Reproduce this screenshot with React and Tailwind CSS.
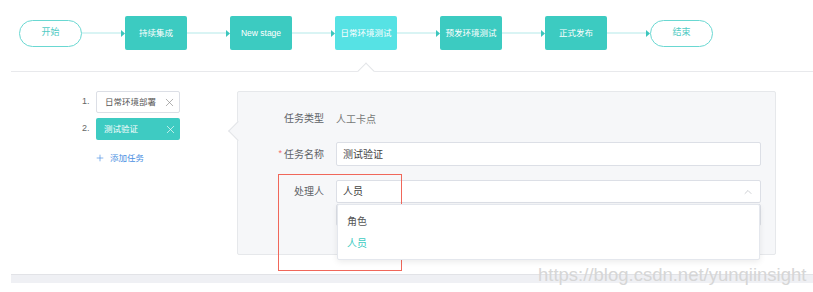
import React from 'react';
import { X, ChevronUp, Plus } from 'lucide-react';

const cjk = { fontFamily: '"Liberation Sans", "Noto Sans CJK SC", sans-serif' };

const stages = [
  { label: '开始', pill: true },
  { label: '持续集成' },
  { label: 'New stage' },
  { label: '日常环境测试', active: true },
  { label: '预发环境测试' },
  { label: '正式发布' },
  { label: '结束', pill: true },
];

const Connector = () => (
  <div className="flex items-center w-[43px]">
    <div className="flex-1 h-[2px] bg-[#d9f4f4]" />
    <svg width="4" height="7" viewBox="0 0 4 7" className="shrink-0">
      <path d="M0 0 L4 3.5 L0 7 Z" fill="#3bc6bd" />
    </svg>
  </div>
);

const StageNode = ({ stage }) => {
  if (stage.pill) {
    return (
      <div className="w-[63px] h-[27px] rounded-full border border-[#6ad8d2] bg-white flex items-center justify-center text-[9px] text-[#52cbc4]">
        {stage.label}
      </div>
    );
  }
  return (
    <div
      className={`w-[62px] h-[34px] rounded-[2px] flex items-center justify-center text-[8.5px] text-white ${
        stage.active ? 'bg-[#56e2e4]' : 'bg-[#3ccbc1]'
      }`}
    >
      {stage.label}
    </div>
  );
};

const TaskItem = ({ index, label, active }) => (
  <div className="flex items-center h-[22px]">
    <span className="w-[14px] text-[9px] text-[#666]">{index}.</span>
    <div
      className={`w-[84px] h-[22px] rounded-[2px] flex items-center justify-between pl-[8px] pr-[3px] text-[8.5px] ${
        active ? 'bg-[#3ecbc2] text-white' : 'bg-white border border-[#dcdfe6] text-[#555]'
      }`}
    >
      <span>{label}</span>
      <X size={13} strokeWidth={1.2} className={active ? 'text-white' : 'text-[#888]'} />
    </div>
  </div>
);

const FormRow = ({ label, required, children, className = '' }) => (
  <div className={`flex items-center ${className}`}>
    <div className="w-[86px] text-right text-[10px] text-[#5f6368] flex justify-end items-center">
      {required && <span className="text-[#f56c6c] mr-[2px] text-[9px]">*</span>}
      {label}
    </div>
    <div className="ml-[12px] flex-1">{children}</div>
  </div>
);

export default function App() {
  return (
    <div className="relative w-[813px] h-[292px] bg-white overflow-hidden" style={cjk}>
      {/* pipeline */}
      <div className="flex items-center pl-[19px] pt-4 h-[50px]">
        {stages.map((s, i) => (
          <React.Fragment key={s.label}>
            {i > 0 && <Connector />}
            <StageNode stage={s} />
          </React.Fragment>
        ))}
      </div>

      {/* separator with notch */}
      <div className="relative mt-[21px] ml-[11px] h-px bg-[#e8e9ec]">
        <div className="absolute left-[349px] -top-[6px] w-[12px] h-[12px] bg-white border-t border-l border-[#e3e5e8] rotate-45" />
      </div>

      {/* content */}
      <div className="flex mt-[19px]">
        <div className="w-[227px] pl-[82px] flex flex-col">
          <TaskItem index={1} label="日常环境部署" />
          <div className="mt-[5px]">
            <TaskItem index={2} label="测试验证" active />
          </div>
          <div className="flex items-center mt-[12px] ml-[13px] text-[8.5px] text-[#4a90e2]">
            <Plus size={10} strokeWidth={1.6} />
            <span className="ml-[5px]">添加任务</span>
          </div>
        </div>

        <div className="ml-[10px] relative w-[539px] h-[164px] border border-[#e6e8eb] bg-[#f6f7f9] rounded-[2px] pt-[14px] pr-[14px]">
          <div className="absolute -left-[7px] top-[32px] w-[14px] h-[14px] bg-[#f6f7f9] border-l border-b border-[#e3e5e8] rotate-45" />

          <FormRow label="任务类型" className="h-[24px]">
            <span className="text-[10px] text-[#777]">人工卡点</span>
          </FormRow>

          <FormRow label="任务名称" required className="mt-[12px]">
            <div className="h-[24px] bg-white border border-[#dcdfe6] rounded-[2px] flex items-center px-[6px] text-[10px] text-[#444]">
              测试验证
            </div>
          </FormRow>

          <FormRow label="处理人" className="mt-[14px]">
            <div className="relative">
              <div className="h-[23px] bg-white border border-[#dcdfe6] rounded-[2px] flex items-center justify-between px-[6px] text-[10px] text-[#444]">
                <span>人员</span>
                <ChevronUp size={12} strokeWidth={1.3} className="text-[#b4b7bd]" />
              </div>
              <div className="absolute top-[24px] left-[1px] z-10 w-[423px] bg-white border border-[#e4e7ed] rounded-[2px] shadow-[0_2px_6px_rgba(0,0,0,0.08)] py-[5px] text-[10px]">
                <div className="h-[22px] flex items-center pl-[9px] text-[#555]">角色</div>
                <div className="h-[22px] flex items-center pl-[9px] text-[#3ecbc2]">人员</div>
              </div>
            </div>
          </FormRow>

          <div className="ml-[98px] mt-[1px] h-[22px] bg-white border border-[#dcdfe6] rounded-[2px]" />
        </div>
      </div>

      {/* bottom bar */}
      <div className="mt-[19px] ml-[11px] h-[9px] border-t border-[#e2e3e7] bg-[#eff0f4]" />

      {/* annotation */}
      <div className="absolute left-[278px] top-[174px] w-[124px] h-[97px] border border-[#f0675a]" />

      {/* watermark */}
      <div className="absolute left-[538px] top-[266px] text-[18.5px] leading-none text-[#d6d6d6]" style={{ fontFamily: '"Liberation Sans", sans-serif' }}>
        https://blog.csdn.net/yunqiinsight
      </div>
    </div>
  );
}
